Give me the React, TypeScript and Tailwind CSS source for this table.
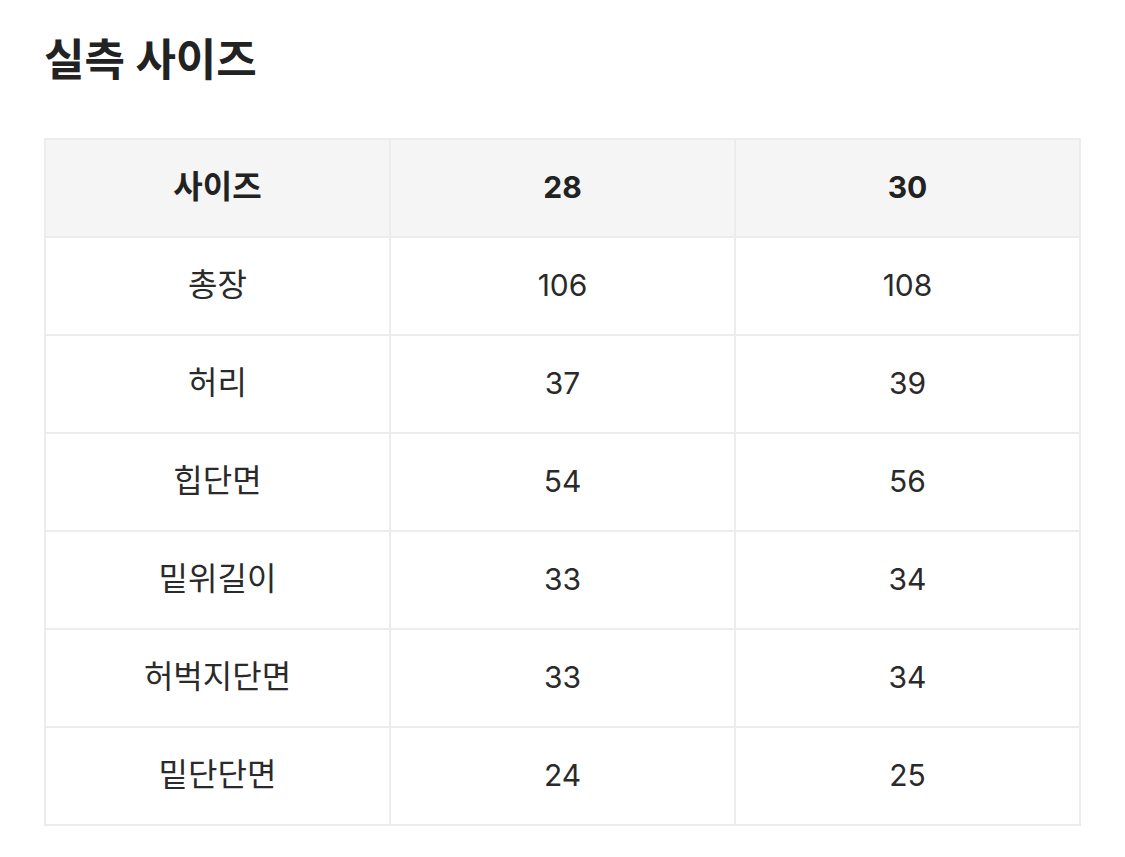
import React from "react";

const rows: [string, string, string][] = [
  ["총장", "106", "108"],
  ["허리", "37", "39"],
  ["힙단면", "54", "56"],
  ["밑위길이", "33", "34"],
  ["허벅지단면", "33", "34"],
  ["밑단단면", "24", "25"],
];

const font = { fontFamily: '"Inter", "Noto Sans CJK KR", "Noto Sans", sans-serif' };

export default function App() {
  return (
    <div className="min-h-[857px] w-[1125px] bg-white pl-[44px] pt-[34px]" style={font}>
      <h1 className="text-[44px] leading-[52px] font-bold text-[#222]">실측 사이즈</h1>
      <table className="mt-[52px] w-[1037px] border-collapse border-2 border-[#ececec] table-fixed">
        <thead>
          <tr className="bg-[#f5f5f5]">
            <th className="h-[98px] w-[345px] border-2 border-[#ececec] pb-[2px] text-[32px] font-bold text-[#222]">사이즈</th>
            <th className="h-[98px] w-[345px] border-2 border-[#ececec] pb-[2px] text-[30px] font-bold text-[#222]">28</th>
            <th className="h-[98px] border-2 border-[#ececec] pb-[2px] text-[30px] font-bold text-[#222]">30</th>
          </tr>
        </thead>
        <tbody>
          {rows.map((r) => (
            <tr key={r[0]}>
              <td className="h-[98px] border-2 border-[#ececec] pb-[2px] text-center text-[32px] font-normal text-[#2a2a2a]">
                {r[0]}
              </td>
              <td className="h-[98px] border-2 border-[#ececec] pb-[2px] text-center text-[30px] font-normal text-[#2a2a2a]">
                {r[1]}
              </td>
              <td className="h-[98px] border-2 border-[#ececec] pb-[2px] text-center text-[30px] font-normal text-[#2a2a2a]">
                {r[2]}
              </td>
            </tr>
          ))}
        </tbody>
      </table>
    </div>
  );
}
